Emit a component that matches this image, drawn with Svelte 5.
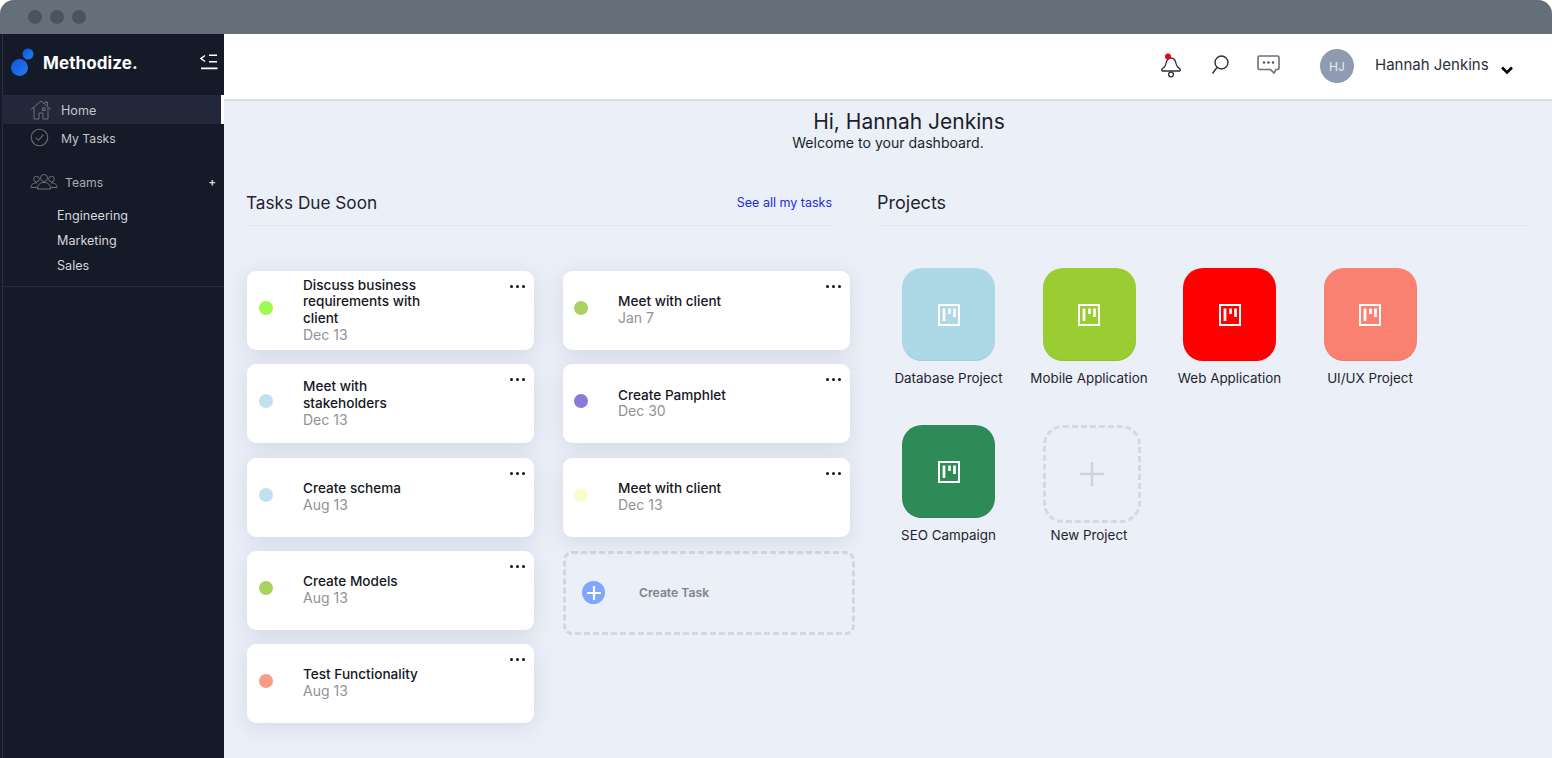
<script>
  const col1 = [
    { t: ['Discuss business', 'requirements with', 'client'], d: 'Dec 13', c: '#9bfb50' },
    { t: ['Meet with', 'stakeholders'], d: 'Dec 13', c: '#bfe0ec' },
    { t: ['Create schema'], d: 'Aug 13', c: '#bfe0ec' },
    { t: ['Create Models'], d: 'Aug 13', c: '#abd160' },
    { t: ['Test Functionality'], d: 'Aug 13', c: '#fc9a88' }
  ];
  const col2 = [
    { t: ['Meet with client'], d: 'Jan 7', c: '#abd160' },
    { t: ['Create Pamphlet'], d: 'Dec 30', c: '#8b78d8' },
    { t: ['Meet with client'], d: 'Dec 13', c: '#fafcd0' }
  ];
  const projects = [
    { n: 'Database Project', c: '#add8e6' },
    { n: 'Mobile Application', c: '#9acd32' },
    { n: 'Web Application', c: '#ff0000' },
    { n: 'UI/UX Project', c: '#fa8072' },
    { n: 'SEO Campaign', c: '#2e8b57' }
  ];
</script>

{#snippet card(task)}
  <div class="card">
    <span class="dot" style="background:{task.c}"></span>
    <div class="card-text">
      {#each task.t as line}<div class="card-title">{line}</div>{/each}
      <div class="card-date">{task.d}</div>
    </div>
    <span class="more"><i></i><i></i><i></i></span>
  </div>
{/snippet}

<div class="window">
  <div class="titlebar">
    <span class="light"></span><span class="light"></span><span class="light"></span>
  </div>
  <div class="body">
    <aside class="sidebar">
      <div class="brand">
        <svg class="logo" width="24" height="28" viewBox="0 0 24 28">
          <defs>
            <linearGradient id="lg" x1="0" y1="0" x2="1" y2="1">
              <stop offset="0" stop-color="#0b56d8" /><stop offset="1" stop-color="#2a7bf0" />
            </linearGradient>
          </defs>
          <circle cx="8.500" cy="19.500" r="8.500" fill="url(#lg)" />
          <circle cx="17" cy="6" r="5.500" fill="url(#lg)" />
        </svg>
        <span class="brand-name">Methodize.</span>
        <svg class="collapse" width="18" height="16" viewBox="0 0 18 16" fill="none" stroke="#fff" stroke-width="1.400">
          <path d="M5 1.500 1 4.500l4 3" />
          <path d="M9 1.200h8M9 7.700h8" />
          <path d="M1 14.300h16.500" stroke-width="1.800" />
        </svg>
      </div>
      <nav class="nav">
        <div class="nav-item active">
          <svg width="22" height="20" viewBox="0 0 22 20" fill="none" stroke="#6d7076" stroke-width="1">
            <path d="M1 9.500 11 1l10 8.500M4 7.500V19h5v-6h4v6h5V7.500M15 3.500V2h2.500v3.500" />
            <rect x="12.500" y="8" width="2.500" height="2.500" />
          </svg>
          <span>Home</span>
        </div>
        <div class="nav-item second">
          <svg width="19" height="19" viewBox="0 0 20 20" fill="none" stroke="#6d7076" stroke-width="1.100">
            <circle cx="10" cy="10" r="8.700" />
            <path d="m6 10 3 3 5-6" />
          </svg>
          <span>My Tasks</span>
        </div>
      </nav>
      <div class="teams">
        <svg width="28" height="17" viewBox="0 0 28 17" fill="none" stroke="#6d7076" stroke-width="1">
          <circle cx="14" cy="5" r="3.500" />
          <path d="M7.500 16c0-5 3-6.500 6.500-6.500s6.500 1.500 6.500 6.500z" />
          <circle cx="6.500" cy="6" r="2.800" />
          <circle cx="21.500" cy="6" r="2.800" />
          <path d="M7 10c-3-.3-6 1-6 4.500h6M21 10c3-.3 6 1 6 4.500h-6" />
        </svg>
        <span>Teams</span>
        <b class="plus">+</b>
      </div>
      <div class="subnav">
        <div>Engineering</div>
        <div>Marketing</div>
        <div>Sales</div>
      </div>
    </aside>
    <main class="main">
      <header class="topbar">
        <svg class="ico-bell" width="22" height="25" viewBox="0 0 22 25" fill="none" stroke="#2b303a" stroke-width="1.300">
          <path d="M2.500 18h17c1 0 1.200-1.600.3-2.100-2.300-1.300-3.300-2.600-3.800-5.400C15.500 7.500 14.800 5 11 5S6.500 7.500 6 10.500c-.5 2.800-1.500 4.100-3.800 5.400-.9.500-.7 2.100.3 2.100z" />
          <circle cx="11" cy="21.500" r="2.400" />
          <circle cx="8" cy="3.500" r="3" fill="#f40008" stroke="none" />
        </svg>
        <svg class="ico-search" width="18" height="20" viewBox="0 0 18 20" fill="none" stroke="#2b303a" stroke-width="1.400">
          <circle cx="10.500" cy="7.500" r="6.500" />
          <path d="M6 12.500 1.500 18.500" />
        </svg>
        <svg class="ico-chat" width="23" height="19" viewBox="0 0 23 19" fill="none" stroke="#6a6f78" stroke-width="1.600">
          <path d="M2.500 1h18A1.500 1.500 0 0 1 22 2.500V13a1.500 1.500 0 0 1-1.500 1.500H19L17 18l-3.500-3.500h-11A1.500 1.500 0 0 1 1 13V2.500A1.500 1.500 0 0 1 2.500 1z" />
          <circle cx="7" cy="7.500" r="1.200" fill="#4a4f58" stroke="none" />
          <circle cx="11.500" cy="7.500" r="1.200" fill="#4a4f58" stroke="none" />
          <circle cx="16" cy="7.500" r="1.200" fill="#4a4f58" stroke="none" />
        </svg>
        <span class="avatar">HJ</span>
        <span class="user">Hannah Jenkins</span>
        <svg class="chev" width="12" height="9" viewBox="0 0 12 9" fill="none" stroke="#000" stroke-width="2.600">
          <path d="m1 1.500 5 5 5-5" />
        </svg>
      </header>
      <section class="content">
        <div class="welcome">
          <h1>Hi, Hannah Jenkins</h1>
          <p>Welcome to your dashboard.</p>
        </div>
        <div class="columns">
          <div class="tasks">
            <div class="section-head">
              <h2 class="tight">Tasks Due Soon</h2>
              <a href="#tasks">See all my tasks</a>
            </div>
            <div class="task-grid">
              <div class="task-col">
                {#each col1 as t}{@render card(t)}{/each}
              </div>
              <div class="task-col col-b">
                {#each col2 as t}{@render card(t)}{/each}
                <div class="create">
                  <span class="create-plus">
                    <svg width="14" height="14" viewBox="0 0 14 14" stroke="#fff" stroke-width="2.200"><path d="M7 0v14M0 7h14" /></svg>
                  </span>
                  <span class="create-label">Create Task</span>
                </div>
              </div>
            </div>
          </div>
          <div class="projects">
            <div class="section-head"><h2>Projects</h2></div>
            <div class="project-grid">
              {#each projects as p}
                <div class="project">
                  <div class="tile" style="background:{p.c}">
                    <svg width="22" height="22" viewBox="0 0 22 22" fill="none" stroke="#fff">
                      <rect x="1" y="1" width="20" height="20" stroke-width="2" />
                      <path d="M6 4.500V17M11.500 4.500V10M16.500 4.500V13" stroke-width="2.700" />
                    </svg>
                  </div>
                  <div class="pname">{p.n}</div>
                </div>
              {/each}
              <div class="project">
                <div class="tile new">
                  <svg width="26" height="26" viewBox="0 0 26 26" stroke="#ced4dc" stroke-width="2.600"><path d="M13 1v24M1 13h24" /></svg>
                </div>
                <div class="pname">New Project</div>
              </div>
            </div>
          </div>
        </div>
      </section>
    </main>
  </div>
</div>

<style>
  :global(body) {
    margin: 0;
    background: #fff;
    font-family: Inter, 'Liberation Sans', sans-serif;
  }
  .window {
    width: 1552px;
    height: 758px;
    overflow: hidden;
    display: flex;
    flex-direction: column;
    background: #dfe3ea;
    border-radius: 14px 14px 0 0;
  }
  .titlebar {
    height: 34px;
    flex: none;
    background: #656f7a;
    display: flex;
    align-items: flex-start;
    gap: 8px;
    padding: 10px 0 0 28px;
    box-sizing: border-box;
  }
  .light { width: 14px; height: 14px; border-radius: 50%; background: #4b545e; }
  .body { flex: 1; display: flex; min-height: 0; }
  .sidebar {
    width: 222px;
    flex: none;
    background: #141a27;
    border-left: 2px solid #141a27;
    box-shadow: inset 1px 0 0 #2a303d;
    color: #c9ccd2;
    font-size: 12.600px;
  }
  .brand {
    height: 61px;
    display: flex;
    align-items: center;
    padding-left: 9px;
  }
  .logo { margin-top: -5px; flex: none; }
  .brand-name {
    margin-left: 8px;
    margin-top: -4px;
    color: #fff;
    font-size: 17px;
    font-weight: 700;
    letter-spacing: 0.100px;
  }
  .collapse { margin-left: 62px; margin-top: -6px; }
  .nav-item {
    height: 29px;
    display: flex;
    align-items: center;
    padding-left: 28px;
    gap: 9px;
    color: #c3c6cc;
  }
  .nav-item span { margin-top: 2px; }
  .nav-item.active { background: #222839; border-right: 3px solid #fff; }
  .nav-item.second { margin-top: -1px; gap: 12px; font-size: 12.200px; }
  .teams {
    display: flex;
    align-items: center;
    margin-top: 15px;
    height: 29px;
    padding-left: 28px;
    gap: 7px;
    color: #a9acb3;
    font-size: 12.200px;
  }
  .teams span { margin-top: 2px; }
  .plus { margin-left: auto; margin-right: 8px; color: #d5d7db; font-size: 11px; }
  .subnav {
    margin-top: 7px;
    padding: 0 0 8px 55px;
    border-bottom: 1px solid #262c3a;
    color: #d4d6da;
    line-height: 25px;
  }
  .main { flex: 1; display: flex; flex-direction: column; min-width: 0; }
  .topbar {
    height: 65px;
    flex: none;
    background: #fff;
    border-bottom: 2px solid #d9dde6;
    display: flex;
    align-items: center;
    padding-left: 936px;
    color: #2a2f3a;
  }
  .ico-bell { margin-top: -3px; flex: none; }
  .ico-search { margin-left: 29px; margin-top: -4px; flex: none; }
  .ico-chat { margin-left: 28px; margin-top: -5px; flex: none; }
  .avatar {
    margin-left: 40px;
    width: 34px;
    height: 34px;
    border-radius: 50%;
    background: #8e9bb0;
    color: #e9ecf1;
    font-size: 12px;
    display: flex;
    align-items: center;
    justify-content: center;
    flex: none;
    margin-top: -1px;
  }
  .user { margin-left: 21px; font-size: 15px; margin-top: -5px; white-space: nowrap; }
  .chev { margin-left: 12px; margin-top: 7px; flex: none; }
  .content { flex: 1; background: #ebeff8; min-height: 0; }
  .welcome { text-align: center; padding-top: 8px; color: #1a1f2b; }
  h1 {
    margin: 0 0 0 42px;
    font-size: 21px;
    font-weight: 400;
    line-height: 26px;
  }
  .welcome p { margin: 0; font-size: 14.100px; line-height: 16px; }
  .columns { display: flex; margin-top: 41px; padding-left: 23px; }
  .tasks { width: 585px; flex: none; }
  .projects { margin-left: 45px; width: 653px; flex: none; }
  .section-head {
    height: 33px;
    display: flex;
    align-items: flex-start;
    justify-content: space-between;
    border-bottom: 1px solid #e3e7f0;
  }
  h2 {
    margin: 0;
    font-size: 18px;
    font-weight: 400;
    line-height: 22px;
    color: #1f2430;
  }
  h2.tight { font-size: 17.200px; margin-left: -1px; }
  .section-head a {
    font-size: 12.500px;
    color: #1a2ee0;
    text-decoration: none;
    line-height: 22px;
  }
  .task-grid { display: flex; gap: 29px; margin-top: 45px; }
  .task-col { width: 287px; flex: none; display: flex; flex-direction: column; gap: 14.250px; }
  .card {
    height: 79px;
    background: #fff;
    border-radius: 9px;
    box-shadow: 0 4px 20px rgba(140, 150, 175, 0.25);
    display: flex;
    align-items: center;
    position: relative;
    padding-left: 12px;
    box-sizing: border-box;
  }
  .col-b .card { padding-left: 11px; }
  .dot { width: 14px; height: 14px; border-radius: 50%; flex: none; margin-top: -5px; }
  .card-text { margin-left: 30px; margin-top: -1px; }
  .card-title { font-size: 13.600px; font-weight: 500; line-height: 16.700px; color: #15181f; }
  .card-date { font-size: 14px; line-height: 16.700px; color: #8f9297; }
  .more {
    position: absolute;
    top: 14px;
    right: 9px;
    display: flex;
    gap: 3px;
  }
  .more i { width: 3px; height: 3px; border-radius: 50%; background: #111; }
  .create {
    width: 292px;
    height: 84px;
    box-sizing: border-box;
    border: 3px dashed #d2d6de;
    border-radius: 9px;
    display: flex;
    align-items: center;
    padding-left: 16px;
    flex: none;
  }
  .create-plus {
    width: 23px;
    height: 23px;
    border-radius: 50%;
    background: #7ea6fb;
    display: flex;
    align-items: center;
    justify-content: center;
  }
  .create-label { margin-left: 34px; font-size: 12.200px; font-weight: 600; color: #7f838b; }
  .project-grid {
    display: grid;
    grid-template-columns: repeat(4, 140.500px);
    grid-auto-rows: 132px;
    row-gap: 25px;
    margin-top: 42px;
  }
  .project { display: flex; flex-direction: column; align-items: center; width: 143px; }
  .tile {
    width: 93px;
    height: 93px;
    flex: none;
    border-radius: 20px;
    display: flex;
    align-items: center;
    justify-content: center;
    box-shadow: inset 0 -1px 1px rgba(0, 0, 0, 0.06);
  }
  .tile.new {
    background: transparent;
    box-shadow: none;
    width: 98px;
    height: 98px;
    margin-left: 5px;
    margin-bottom: -5px;
    box-sizing: border-box;
    border: 3px dashed #d5d9e1;
  }
  .pname { margin-top: 9px; font-size: 13.400px; line-height: 17px; color: #1f2430; white-space: nowrap; }
</style>
